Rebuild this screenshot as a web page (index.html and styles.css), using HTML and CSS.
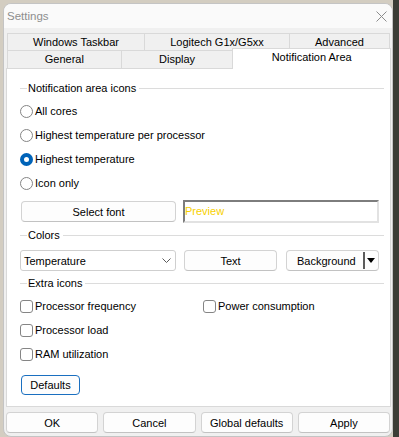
FILE: index.html
```html
<!DOCTYPE html>
<html lang="en">

<head>
    <meta charset="UTF-8">
    <meta name="viewport" content="width=device-width, initial-scale=1.0">
    <title>Settings</title>
    <link rel="stylesheet" href="styles.css">
</head>

<body>
    <div class="window">
        <div class="titlebar">
            <span class="title">Settings</span>
            <svg class="close" width="11" height="11" viewBox="0 0 11 11">
                <path d="M0.5 0.5L10.5 10.5M10.5 0.5L0.5 10.5" stroke="#8c8c8c" stroke-width="1" fill="none" />
            </svg>
        </div>
        <div class="dialog">
            <div class="tabs">
                <div class="tab-row">
                    <div class="tab tab-taskbar">Windows Taskbar</div>
                    <div class="tab tab-logitech">Logitech G1x/G5xx</div>
                    <div class="tab tab-advanced">Advanced</div>
                </div>
                <div class="tab-row">
                    <div class="tab tab-general">General</div>
                    <div class="tab tab-display">Display</div>
                    <div class="tab tab-notify active">Notification Area</div>
                </div>
            </div>

            <div class="panel">
                <div class="group">Notification area icons</div>
                <div class="options">
                    <label class="option"><span class="radio"></span>All cores</label>
                    <label class="option"><span class="radio"></span>Highest temperature per processor</label>
                    <label class="option"><span class="radio checked"></span>Highest temperature</label>
                    <label class="option"><span class="radio"></span>Icon only</label>
                </div>
                <div class="font-row">
                    <button class="btn btn-font">Select font</button>
                    <div class="preview">Preview</div>
                </div>

                <div class="group group-colors">Colors</div>
                <div class="color-row">
                    <div class="combo">
                        <span>Temperature</span>
                        <svg width="9" height="5" viewBox="0 0 9 5">
                            <path d="M0.5 0.5L4.5 4.5L8.5 0.5" stroke="#5a5a5a" stroke-width="1" fill="none" />
                        </svg>
                    </div>
                    <button class="btn btn-text">Text</button>
                    <div class="btn btn-split">
                        <span class="split-label">Background</span>
                        <span class="split-bar"></span>
                        <svg width="8" height="5" viewBox="0 0 8 5">
                            <path d="M0 0H8L4 5Z" fill="#000" />
                        </svg>
                    </div>
                </div>

                <div class="group group-extra">Extra icons</div>
                <div class="checks">
                    <label class="option"><span class="check"></span>Processor frequency</label>
                    <label class="option"><span class="check"></span>Power consumption</label>
                    <label class="option"><span class="check"></span>Processor load</label>
                    <span></span>
                    <label class="option"><span class="check"></span>RAM utilization</label>
                </div>

                <button class="btn btn-defaults">Defaults</button>
            </div>

            <div class="buttons">
                <button class="btn">OK</button>
                <button class="btn">Cancel</button>
                <button class="btn">Global defaults</button>
                <button class="btn">Apply</button>
            </div>
        </div>
    </div>
</body>

</html>
```

FILE: styles.css
```css
* {
    box-sizing: border-box;
}

body {
    margin: 0;
    height: 437px;
    overflow: hidden;
    font-family: "Liberation Sans", Arial, sans-serif;
    font-size: 11px;
    color: #000;
    background: linear-gradient(90deg, #d3cdc1 0, #d3cdc1 393px, #3b3d36 393px);
}

.window {
    margin: 3px 0 0 3px;
    width: 390px;
    background: #f0f0f0;
    border: 1px solid #c4c4c4;
    border-radius: 8px;
    overflow: hidden;
}

.titlebar {
    height: 24px;
    background: #fafafa;
    display: flex;
    align-items: center;
    justify-content: space-between;
    padding: 0 5px 0 3px;
}

.title {
    font-size: 11.5px;
    color: #8e8e8e;
}

.close {
    margin-top: 1px;
}

.dialog {
    padding: 5px 1px 3px 2px;
}

.tabs {
    margin-left: 1px;
}

.tab-row {
    display: flex;
    align-items: flex-start;
}

.tab {
    height: 17px;
    line-height: 16px;
    text-align: center;
    background: #f0f0f0;
    border: 1px solid #d9d9d9;
    border-bottom: none;
    white-space: nowrap;
}

.tab + .tab {
    margin-left: -1px;
}

.tab-row:first-child .tab {
    height: 17px;
}

.tab-row + .tab-row .tab {
    height: 18px;
    line-height: 17px;
}

.tab-taskbar { width: 138px; }
.tab-logitech { width: 146px; }
.tab-advanced { width: 101px; }
.tab-general { width: 115px; }
.tab-display { width: 113px; }
.tab-notify { width: 159px; }

.tab-row .tab.active {
    height: 21px;
    line-height: 17px;
    margin-top: -2px;
    margin-bottom: -1px;
    background: #fff;
    z-index: 1;
}

.panel {
    background: #fff;
    border: 1px solid #d9d9d9;
    padding: 12px 11px 11px 13px;
}

.group {
    display: flex;
    align-items: center;
    height: 14px;
    margin-right: -5px;
}

.group::before {
    content: '';
    width: 7px;
    height: 1px;
    background: #dcdcdc;
    margin-right: 1px;
}

.group::after {
    content: '';
    flex: 1;
    height: 1px;
    background: #dcdcdc;
    margin-left: 3px;
}

.options {
    margin-top: 4px;
}

.option {
    display: flex;
    align-items: center;
    height: 24px;
    white-space: nowrap;
}

.radio {
    width: 13px;
    height: 13px;
    border: 1px solid #858585;
    border-radius: 50%;
    background: #fff;
    margin-right: 2px;
    flex: none;
}

.radio.checked {
    border: 4px solid #0063b8;
    background: #fff;
}

.check {
    width: 13px;
    height: 13px;
    border: 1px solid #858585;
    border-radius: 3px;
    background: #fff;
    margin-right: 2px;
    flex: none;
}

.btn {
    font-family: inherit;
    font-size: 11px;
    color: #000;
    background: #fdfdfd;
    border: 1px solid #d3d3d3;
    border-bottom-color: #c2c2c2;
    border-radius: 4px;
    height: 21px;
    padding: 0;
}

.font-row {
    display: flex;
    align-items: center;
    margin-top: 5px;
    height: 23px;
}

.btn-font {
    width: 155px;
    margin-left: 1px;
}

.preview {
    flex: 1;
    height: 23px;
    margin-left: 7px;
    border-top: 2px solid #7d7d7d;
    border-left: 2px solid #7d7d7d;
    border-right: 2px solid #e2e2e2;
    border-bottom: 2px solid #e2e2e2;
    color: #f7d000;
    line-height: 19px;
    padding-left: 0;
}

.group-colors {
    margin-top: 5px;
}

.color-row {
    display: flex;
    align-items: center;
    margin-top: 8px;
    height: 21px;
}

.combo {
    width: 156px;
    height: 21px;
    border: 1px solid #cfcfcf;
    border-radius: 3px;
    background: #fff;
    display: flex;
    align-items: center;
    justify-content: space-between;
    padding: 0 4px 0 3px;
}

.btn-text {
    width: 93px;
    margin-left: 8px;
}

.btn-split {
    flex: 1;
    margin-left: 9px;
    display: flex;
    align-items: center;
    padding-right: 3px;
}

.split-label {
    flex: 1;
    padding-left: 10px;
}

.split-bar {
    width: 2px;
    height: 17px;
    background: #5b5b5b;
    margin-right: 2px;
}

.group-extra {
    margin-top: 5px;
}

.checks {
    margin-top: 4px;
    display: grid;
    grid-template-columns: 183px 1fr;
}

.btn-defaults {
    display: block;
    width: 59px;
    height: 20px;
    margin: 9px 0 0 1px;
    border: 1px solid #1a6fc0;
}

.buttons {
    display: flex;
    gap: 5px;
    margin-top: 5px;
    padding-right: 1px;
}

.buttons .btn {
    flex: 1;
    height: 21px;
}
```
